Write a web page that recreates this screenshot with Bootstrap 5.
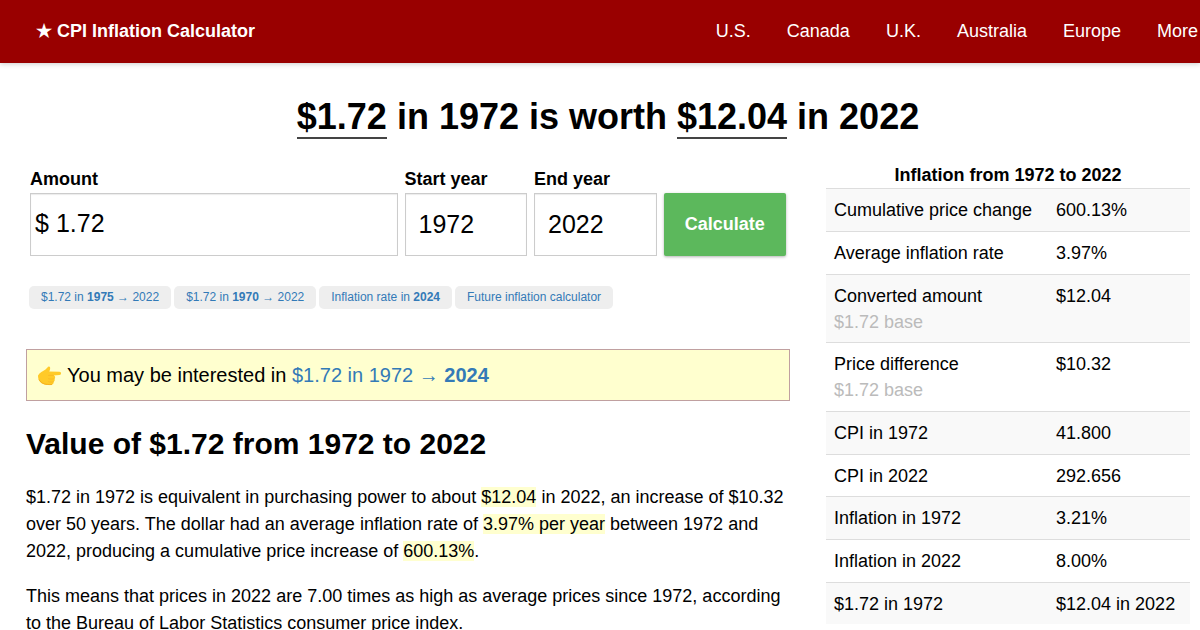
<!DOCTYPE html>
<html lang="en">
<head>
<meta charset="utf-8">
<meta name="viewport" content="width=device-width, initial-scale=1">
<title>$1.72 in 1972 is worth $12.04 in 2022</title>
<link href="https://cdn.jsdelivr.net/npm/bootstrap@5.3.0/dist/css/bootstrap.min.css" rel="stylesheet">
<style>
  body { font-family: "Liberation Sans", Arial, sans-serif; font-size: 18px; line-height: 27px; color: #000; background: #fff; overflow-x: hidden; }
  a { color: #337ab7; text-decoration: none; }
  .site-bar { background: #990000; box-shadow: 0 1px 5px rgba(0,0,0,.2); min-height: 63px; padding: 0 2px 0 36px; }
  .site-bar .navbar-brand { font-size: 18px; line-height: 27px; }
  .site-bar .navbar-nav { gap: 36px; }
  .site-bar .nav-link { color: #fff; }
  .page { padding: 0 10px 0 26px; }
  .page-title { font-size: 36px; line-height: 44px; margin: 32px 0 23px; }
  .page-title span { border-bottom: 2px solid #444; }
  .columns { --bs-gutter-x: 36px; }
  .calc { display: grid; grid-template-columns: 3fr 1fr 1fr 1fr; gap: 7px; padding: 4px 4px 0; align-items: end; }
  .calc label { display: block; font-weight: 700; line-height: 27px; }
  .box { display: flex; align-items: center; width: 100%; height: 63px; border: 1px solid #ccc; border-radius: 0; background: #fff; color: #000; font-size: 25px; line-height: 35px; box-shadow: inset 0 1px 1px rgba(0,0,0,.08); }
  input.box { padding: 0 13px; }
  .money { padding: 0 0 2px 4px; }
  .money input { border: 0; background: transparent; flex: 1; min-width: 0; padding: 0 7px; color: #000; }
  .btn-calc { height: 63px; padding: 0; border: 0; border-radius: 2px; background: #5cb85c; color: #fff; font-size: 18px; font-weight: 700; box-shadow: 0 1px 3px rgba(0,0,0,.3); }
  .btn-calc:hover { background: #4cae4c; color: #fff; }
  .pills { gap: 3px; margin: 30px 3px 40px; }
  .pills a { background: #eee; border-radius: 5px; padding: 0 12px; font-size: 12px; line-height: 23px; }
  .notice { background: #ffffcf; border: 1px solid #c0a0a0; padding: 10px; font-size: 20px; line-height: 30px; }
  .notice svg { width: 25px; height: 25px; margin-right: 5px; flex: none; }
  .section-title { font-size: 30px; line-height: 36px; margin: 25px 0 22px; }
  .page p { margin-bottom: 18px; }
  .hl { background: #ffffcf; }
  .facts { line-height: 26px; }
  .facts caption { padding: 0; line-height: 26px; color: #000; }
  .facts td { padding: 8px; border-top: 1px solid #ddd; border-bottom: 0; color: #000; }
  .facts tr:nth-child(3n) td { padding-bottom: 7px; }
  .facts tr:nth-child(odd) td { background: #f9f9f9; box-shadow: none; }
  .facts td:first-child { width: 61%; }
  .base { color: #bbb; }
</style>
</head>
<body>
<nav class="navbar navbar-expand site-bar">
  <a class="navbar-brand fw-bold text-white m-0 p-0" href="#">★ CPI Inflation Calculator</a>
  <ul class="navbar-nav ms-auto">
    <li class="nav-item"><a class="nav-link p-0" href="#">U.S.</a></li>
    <li class="nav-item"><a class="nav-link p-0" href="#">Canada</a></li>
    <li class="nav-item"><a class="nav-link p-0" href="#">U.K.</a></li>
    <li class="nav-item"><a class="nav-link p-0" href="#">Australia</a></li>
    <li class="nav-item"><a class="nav-link p-0" href="#">Europe</a></li>
    <li class="nav-item"><a class="nav-link p-0" href="#">More</a></li>
  </ul>
</nav>
<main class="container-fluid page">
  <h1 class="page-title text-center fw-bold"><span>$1.72</span> in 1972 is worth <span>$12.04</span> in 2022</h1>
  <div class="row columns">
    <div class="col-8">
      <form class="calc">
        <div>
          <label for="amount">Amount</label>
          <div class="box money"><span>$</span><input id="amount" type="text" value="1.72"></div>
        </div>
        <div>
          <label for="start">Start year</label>
          <input class="box" id="start" type="text" value="1972">
        </div>
        <div>
          <label for="end">End year</label>
          <input class="box" id="end" type="text" value="2022">
        </div>
        <button class="btn btn-calc" type="button">Calculate</button>
      </form>
      <div class="pills d-flex flex-wrap">
        <a href="#">$1.72 in <b>1975</b> → 2022</a>
        <a href="#">$1.72 in <b>1970</b> → 2022</a>
        <a href="#">Inflation rate in <b>2024</b></a>
        <a href="#">Future inflation calculator</a>
      </div>
      <div class="notice d-flex align-items-center">
        <svg viewBox="0 0 25 25" aria-hidden="true">
          <path d="M1 12.5C2.500 9.500 6 8 8.500 6.500C10 5.500 10.500 3.500 12 3.500C13.700 3.600 13.400 6.500 12.300 8.600L22.500 8.800C24.500 9 24.500 11.800 22.500 12.100L16.500 12.400C18.500 12.700 18.700 15 17.300 15.700C18.200 16.700 17.700 18.400 16.500 18.700C17 20 16.200 21.300 15 21.500C12 22.400 8 22.200 5.500 20.700C3 19.300 1 17 1 12.500Z" fill="#ffca28"/>
          <path d="M16.500 12.400H11.500M17.300 15.700C15.500 16.300 13.500 16.200 11.600 15.800M16.500 18.700C14.800 19.300 13 19.200 11.600 18.700" fill="none" stroke="#f7b726" stroke-width=".8" stroke-linecap="round"/>
          <path d="M2 16.500C4 20.500 9 22 15 21.500" fill="none" stroke="#f5b122" stroke-width="1"/>
        </svg>
        <span>You may be interested in <a href="#">$1.72 in 1972 → <b>2024</b></a></span>
      </div>
      <h2 class="section-title fw-bold">Value of $1.72 from 1972 to 2022</h2>
      <p>$1.72 in 1972 is equivalent in purchasing power to about <span class="hl">$12.04</span> in 2022, an increase of $10.32 over 50 years. The dollar had an average inflation rate of <span class="hl">3.97% per year</span> between 1972 and 2022, producing a cumulative price increase of <span class="hl">600.13%</span>.</p>
      <p>This means that prices in 2022 are 7.00 times as high as average prices since 1972, according to the Bureau of Labor Statistics consumer price index.</p>
    </div>
    <div class="col-4">
      <table class="table facts caption-top mb-0">
        <caption class="text-center fw-bold">Inflation from 1972 to 2022</caption>
        <tbody>
          <tr><td>Cumulative price change</td><td>600.13%</td></tr>
          <tr><td>Average inflation rate</td><td>3.97%</td></tr>
          <tr><td>Converted amount<br><span class="base">$1.72 base</span></td><td>$12.04</td></tr>
          <tr><td>Price difference<br><span class="base">$1.72 base</span></td><td>$10.32</td></tr>
          <tr><td>CPI in 1972</td><td>41.800</td></tr>
          <tr><td>CPI in 2022</td><td>292.656</td></tr>
          <tr><td>Inflation in 1972</td><td>3.21%</td></tr>
          <tr><td>Inflation in 2022</td><td>8.00%</td></tr>
          <tr><td>$1.72 in 1972</td><td>$12.04 in 2022</td></tr>
        </tbody>
      </table>
    </div>
  </div>
</main>
<script src="https://cdn.jsdelivr.net/npm/bootstrap@5.3.0/dist/js/bootstrap.bundle.min.js"></script>
</body>
</html>
